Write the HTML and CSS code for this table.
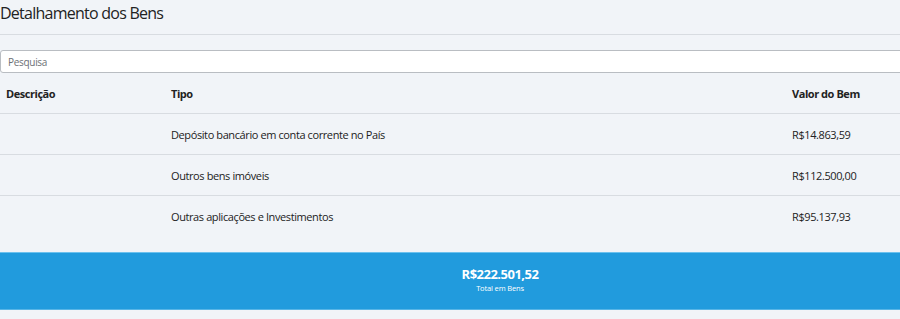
FILE: index.html
```html
<!DOCTYPE html>
<html lang="pt-BR">
<head>
<meta charset="utf-8">
<title>Detalhamento dos Bens</title>
<link rel="stylesheet" href="styles.css">
</head>
<body>
<div class="panel">
  <h2 class="panel-title">Detalhamento dos Bens</h2>
  <div class="search-row">
    <input class="search" type="text" placeholder="Pesquisa">
  </div>
  <div class="table">
    <div class="row head">
      <div class="cell c-desc">Descrição</div>
      <div class="cell c-tipo">Tipo</div>
      <div class="cell c-valor">Valor do Bem</div>
    </div>
    <div class="row">
      <div class="cell c-desc"></div>
      <div class="cell c-tipo">Depósito bancário em conta corrente no País</div>
      <div class="cell c-valor">R$14.863,59</div>
    </div>
    <div class="row">
      <div class="cell c-desc"></div>
      <div class="cell c-tipo">Outros bens imóveis</div>
      <div class="cell c-valor">R$112.500,00</div>
    </div>
    <div class="row last">
      <div class="cell c-desc"></div>
      <div class="cell c-tipo">Outras aplicações e Investimentos</div>
      <div class="cell c-valor">R$95.137,93</div>
    </div>
  </div>
  <div class="total">
    <div class="total-value">R$222.501,52</div>
    <div class="total-label">Total em Bens</div>
  </div>
</div>
</body>
</html>
```
FILE: styles.css
```css
html, body {
  margin: 0;
  padding: 0;
  background: #f1f4f8;
}

body {
  font-family: "Open Sans", "Noto Sans", sans-serif;
  color: #222;
  width: 900px;
  height: 319px;
  overflow: hidden;
}

.panel {
  width: 900px;
}

.panel-title {
  margin: 0;
  height: 35px;
  box-sizing: border-box;
  padding: 2px 0 0 0;
  font-size: 16px;
  font-weight: 400;
  letter-spacing: -0.75px;
  line-height: 22px;
  color: #222;
  border-bottom: 1px solid #d8dce1;
}

.search-row {
  padding-top: 15px;
}

.search {
  display: block;
  box-sizing: border-box;
  width: 904px;
  height: 23px;
  margin: 0;
  padding: 0 7px;
  border: 1px solid #b9bdc2;
  border-radius: 3px;
  background: #fff;
  font-family: inherit;
  font-size: 10px;
  letter-spacing: -0.3px;
  color: #333;
  outline: none;
}

.search::placeholder {
  color: #6c7075;
}

.table {
  display: flex;
  flex-direction: column;
}

.row {
  display: grid;
  grid-template-columns: 165px 621px 1fr;
  box-sizing: border-box;
  height: 41px;
  align-items: center;
  border-bottom: 1px solid #d8dce1;
  font-size: 11px;
  letter-spacing: -0.4px;
}

.row.head {
  height: 41px;
  font-weight: 700;
  letter-spacing: -0.45px;
}

.row.last {
  border-bottom: none;
  height: 56px;
  align-items: start;
  padding-top: 13px;
}

.cell {
  padding-left: 6px;
  white-space: nowrap;
}

.total {
  height: 58px;
  box-sizing: border-box;
  padding: 0 0 4px 100px;
  background: #219bdd;
  border-top: 1px solid #6cc1ee;
  border-bottom: 1px solid #58b5e6;
  color: #fff;
  text-align: center;
  display: flex;
  flex-direction: column;
  align-items: center;
  justify-content: center;
}

.total-value {
  font-size: 13px;
  font-weight: 700;
  letter-spacing: -0.5px;
  line-height: 18px;
}

.total-label {
  font-size: 7.5px;
  letter-spacing: -0.15px;
  line-height: 11px;
}
```
